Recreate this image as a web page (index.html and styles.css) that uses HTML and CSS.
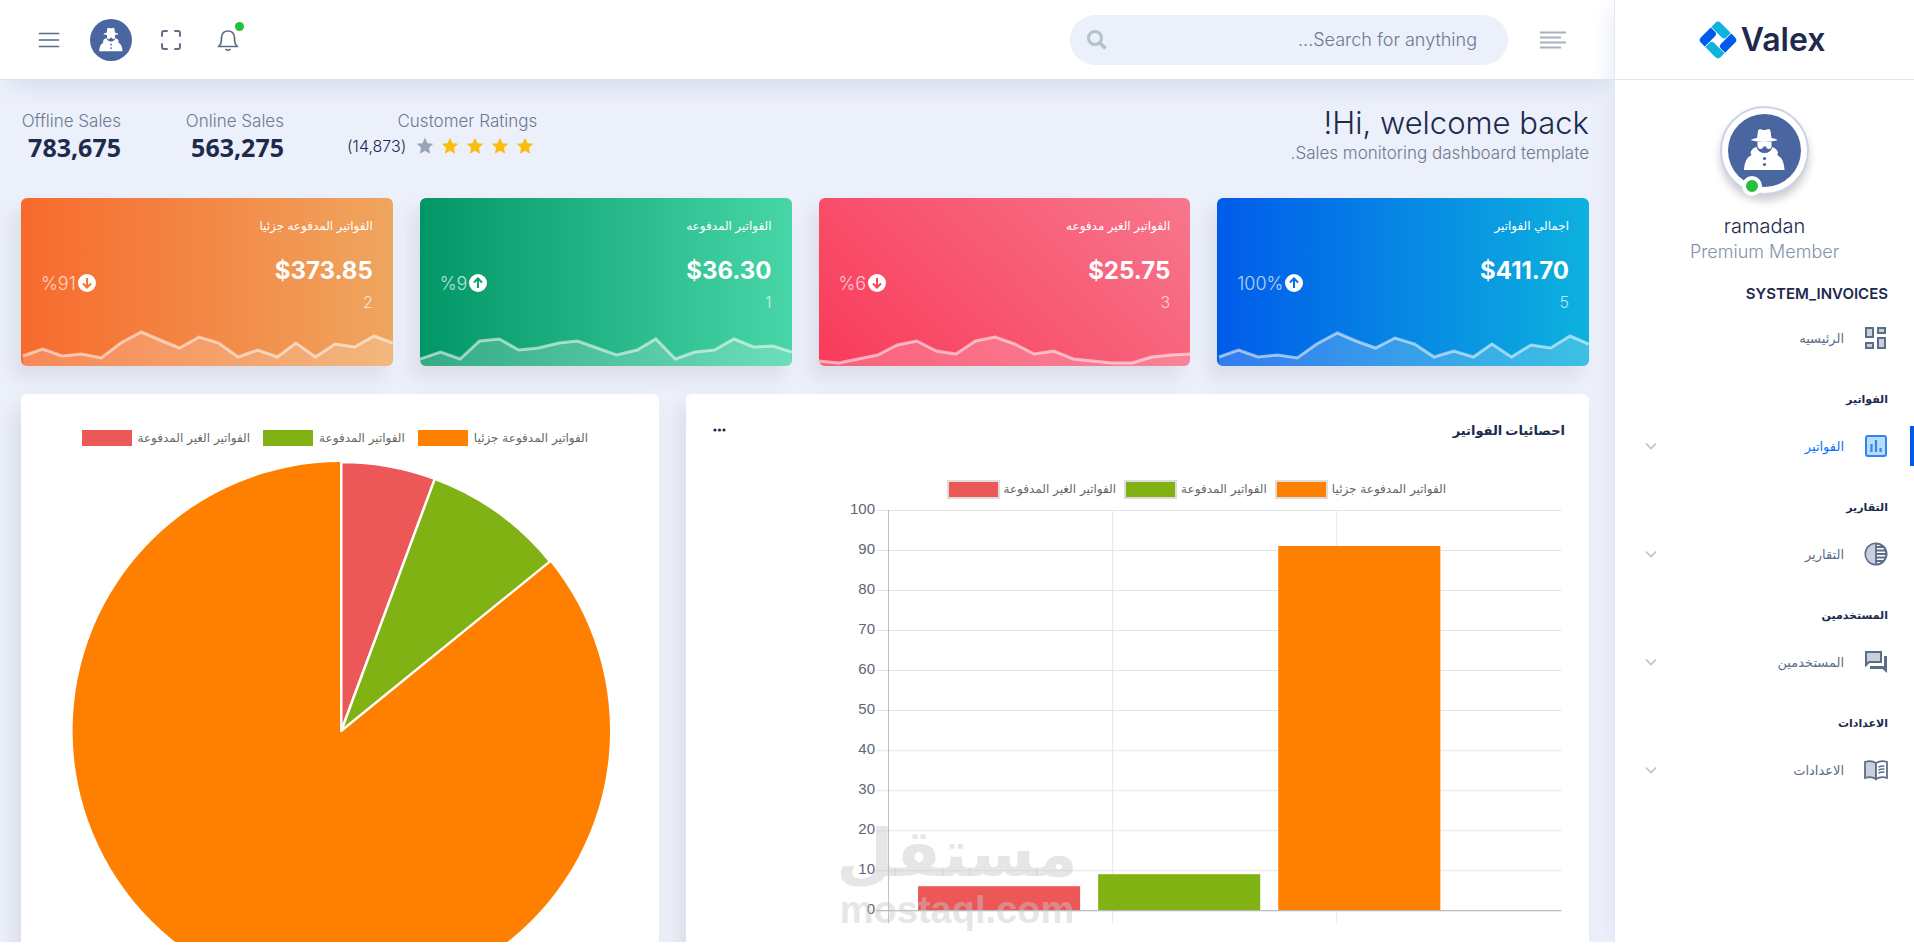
FILE: index.html
```html
<!DOCTYPE html>
<html lang="ar" dir="rtl">
<head>
  <meta charset="UTF-8" />
  <meta name="viewport" content="width=device-width, initial-scale=1.0"/>
  <title>Valex - Dashboard</title>
  <link rel="stylesheet" href="styles.css">
</head>
<body>

<!-- shared symbols -->
<svg class="symbols" aria-hidden="true">
  <symbol id="spy" viewBox="0 0 73 73">
    <circle cx="36.500" cy="36.500" r="36.500" fill="#4a66a0"/>
    <path fill="#fff" d="M29 24l1-7q1-3 3.500-1.500q2.800 1 5.500 0q3-1.500 3.500 1.500l1 7q5 .8 6 2.300q-6 1.700-13.500 1.700t-13-1.700q1-1.500 6-2.300z"/>
    <path fill="#fff" d="M29.500 28h14v4q0 3-2.500 3q-2.500 0-3-2.500h-2.500q-.5 2.500-3 2.500t-3-3z"/>
    <path fill="#fff" d="M28.500 33q2 6 8 6t8-6q5 2 5.500 6l-1 2q7 3 7.500 15h-40.500q.5-12 7.500-15l-1-2q1-5 6-6z"/>
    <circle cx="36.500" cy="44.500" r="1.600" fill="#4a66a0"/>
    <circle cx="36.500" cy="50.500" r="1.600" fill="#4a66a0"/>
  </symbol>
  <symbol id="star" viewBox="0 0 24 24">
    <path d="M12 1l3.300 7.300 7.700.8-5.800 5.300 1.700 8-6.900-4.200-6.900 4.200 1.700-8L1 9.100l7.700-.8z"/>
  </symbol>
  <symbol id="chevron" viewBox="0 0 12 12">
    <path d="M1 3.500l5 5 5-5" fill="none" stroke="#b4c4d2" stroke-width="1.600"/>
  </symbol>
  <symbol id="arrow-up" viewBox="0 0 20 20">
    <circle cx="10" cy="10" r="10" fill="#fff"/>
    <path d="M10 15.500v-10M5.500 9.500l4.500-4.500 4.500 4.500" fill="none" stroke="currentColor" stroke-width="2.200"/>
  </symbol>
  <symbol id="arrow-down" viewBox="0 0 20 20">
    <circle cx="10" cy="10" r="10" fill="#fff"/>
    <path d="M10 4.500v10M5.500 10.500l4.500 4.500 4.500-4.500" fill="none" stroke="currentColor" stroke-width="2.200"/>
  </symbol>
</svg>

<div class="page">

  <aside class="sidebar">
    <a class="logo" href="#">
      <span>Valex</span>
      <svg width="40" height="40" viewBox="0 0 40 40" aria-hidden="true">
        <g transform="rotate(45 20 20) translate(6 6)">
          <path fill="#0db2de" d="M4 0h14v6q0 3.500-3.500 3.500H0V4q0-4 4-4z"/>
          <path fill="#005bea" d="M18.800 0H24q4 0 4 4v14h-6q-3.200 0-3.200-3.500z"/>
          <path fill="#0db2de" d="M28 18.800V24q0 4-4 4H10v-6q0-3.200 3.500-3.200z"/>
          <path fill="#005bea" d="M9.200 28H4q-4 0-4-4V10.200h6q3.200 0 3.200 3.500z"/>
        </g>
      </svg>
    </a>

    <div class="profile">
      <div class="profile-picture">
        <svg width="73" height="73" aria-hidden="true"><use href="#spy"/></svg>
        <span class="status"></span>
      </div>
      <h4>ramadan</h4>
      <span class="role">Premium Member</span>
    </div>

    <nav class="side-menu">
      <h3 class="latin">SYSTEM_INVOICES</h3>
      <a href="#">
        <svg class="icon" viewBox="0 0 24 24" aria-hidden="true">
          <g fill="#c9d0dc" stroke="#5b6e88" stroke-width="2">
            <rect x="2" y="2" width="7" height="9"/><rect x="14" y="2" width="7" height="5"/>
            <rect x="2" y="17" width="7" height="5"/><rect x="14" y="12" width="7" height="10"/>
          </g>
        </svg>
        <span>الرئيسيه</span>
      </a>

      <h3>الفواتير</h3>
      <a class="active" href="#">
        <svg class="icon" viewBox="0 0 24 24" aria-hidden="true">
          <rect x="2" y="2" width="20" height="20" rx="2" fill="#b8dcfb" stroke="#2f86ee" stroke-width="2"/>
          <path d="M7.500 10v8M12 6v12M16.500 14v4" stroke="#2f86ee" stroke-width="2.200"/>
        </svg>
        <span>الفواتير</span>
        <svg class="chevron" aria-hidden="true"><use href="#chevron"/></svg>
      </a>

      <h3>التقارير</h3>
      <a href="#">
        <svg class="icon" viewBox="0 0 24 24" aria-hidden="true">
          <circle cx="12" cy="12" r="10.500" fill="#fff" stroke="#5b6e88" stroke-width="2"/>
          <path d="M12 2a10 10 0 0 0 0 20z" fill="#c9d0dc"/>
          <path d="M12 2v20M12 5h7M12 8.500h9M12 12h10M12 15.500h9M12 19h7" stroke="#5b6e88" stroke-width="1.800"/>
        </svg>
        <span>التقارير</span>
        <svg class="chevron" aria-hidden="true"><use href="#chevron"/></svg>
      </a>

      <h3>المستخدمين</h3>
      <a href="#">
        <svg class="icon" viewBox="0 0 24 24" aria-hidden="true">
          <path d="M2 2h15v10H5l-3 3z" fill="#c9d0dc" stroke="#5b6e88" stroke-width="2"/>
          <path d="M20 6h3v17l-4.500-4H6v-3h14z" fill="#5b6e88"/>
        </svg>
        <span>المستخدمين</span>
        <svg class="chevron" aria-hidden="true"><use href="#chevron"/></svg>
      </a>

      <h3>الاعدادات</h3>
      <a href="#">
        <svg class="icon" viewBox="0 0 24 24" aria-hidden="true">
          <path d="M12 5q-5-3-11-1v16q6-2 11 1z" fill="#c9d0dc" stroke="#5b6e88" stroke-width="1.800"/>
          <path d="M12 5q5-3 11-1v16q-6-2-11 1z" fill="#fff" stroke="#5b6e88" stroke-width="1.800"/>
          <path d="M14.500 9q3-1.200 6-.8M14.500 12q3-1.200 6-.8M14.500 15q3-1.200 6-.8" fill="none" stroke="#5b6e88" stroke-width="1.500"/>
        </svg>
        <span>الاعدادات</span>
        <svg class="chevron" aria-hidden="true"><use href="#chevron"/></svg>
      </a>
    </nav>
  </aside>

  <div class="main">

    <header class="header">
      <button class="icon-button" aria-label="Toggle sidebar">
        <svg width="26" height="20" viewBox="0 0 26 20"><path d="M0 2.500h26M0 7.500h21M0 12.500h26M0 17.500h21" stroke="#a9b0be" stroke-width="2.200"/></svg>
      </button>
      <form class="search">
        <label class="sr-only" for="searchInput">Search</label>
        <input type="text" id="searchInput" placeholder="Search for anything...">
        <button aria-label="Search">
          <svg width="22" height="22" viewBox="0 0 22 22"><circle cx="9" cy="9" r="6.500" fill="none" stroke="#b0c2ca" stroke-width="3"/><path d="M13.500 13.500l6 6" stroke="#b0c2ca" stroke-width="3.500"/></svg>
        </button>
      </form>

      <div class="header-right">
        <button class="icon-button bell" aria-label="Notifications">
          <svg width="24" height="24" viewBox="0 0 24 24" fill="none" stroke="#5b6e88" stroke-width="1.700">
            <path d="M2.500 18.500q3-1.500 3-9Q6 3 12 3t6.500 6.500q0 7.500 3 9z" stroke-linejoin="round"/><path d="M9.500 21q2.500 2.500 5 0"/>
          </svg>
          <span class="pulse"></span>
        </button>
        <button class="icon-button fullscreen" aria-label="Fullscreen">
          <svg width="24" height="24" viewBox="0 0 24 24" fill="none" stroke="#5b6e88" stroke-width="1.900" stroke-linecap="round">
            <path d="M8 3H5a2 2 0 0 0-2 2v3M16 3h3a2 2 0 0 1 2 2v3M21 16v3a2 2 0 0 1-2 2h-3M3 16v3a2 2 0 0 0 2 2h3"/>
          </svg>
        </button>
        <button class="icon-button" aria-label="Profile">
          <svg width="42" height="42"><use href="#spy"/></svg>
        </button>
        <button class="icon-button" aria-label="Menu">
          <svg width="24" height="24" viewBox="0 0 24 24" stroke="#5b6e88" stroke-width="1.700" stroke-linecap="round"><path d="M2.500 5.500h19M2.500 12h19M2.500 18.500h19"/></svg>
        </button>
      </div>
    </header>

    <main class="content">
      <div class="welcome">
        <div>
          <h2>Hi, welcome back!</h2>
          <p>Sales monitoring dashboard template.</p>
        </div>
        <div class="stats">
          <div class="stat">
            <span class="stat-label">Customer Ratings</span>
            <div class="rating">
              <svg><use href="#star"/></svg>
              <svg><use href="#star"/></svg>
              <svg><use href="#star"/></svg>
              <svg><use href="#star"/></svg>
              <svg class="off"><use href="#star"/></svg>
              <span>(14,873)</span>
            </div>
          </div>
          <div class="stat">
            <span class="stat-label">Online Sales</span>
            <strong>563,275</strong>
          </div>
          <div class="stat">
            <span class="stat-label">Offline Sales</span>
            <strong>783,675</strong>
          </div>
        </div>
      </div>

      <div class="grid">
        <section class="sales-card primary">
          <h6>اجمالي الفواتير</h6>
          <div class="sales-row">
            <div>
              <h4>$411.70</h4>
              <p>5</p>
            </div>
            <div class="percent"><svg><use href="#arrow-up"/></svg><span>100%</span></div>
          </div>
          <svg class="spark" viewBox="0 0 380 40" preserveAspectRatio="none" aria-hidden="true">
            <polygon points="2,40 2,31 22,24 42,31 62,29 82,32 102,18 123,7 142,15 162,22 182,12 202,18 222,31 242,25 262,31 281,18 301,31 321,19 341,22 361,10 380,18 380,40"/>
            <polyline points="2,31 22,24 42,31 62,29 82,32 102,18 123,7 142,15 162,22 182,12 202,18 222,31 242,25 262,31 281,18 301,31 321,19 341,22 361,10 380,18"/>
          </svg>
        </section>

        <section class="sales-card danger">
          <h6>الفواتير الغير مدفوعه</h6>
          <div class="sales-row">
            <div>
              <h4>$25.75</h4>
              <p>3</p>
            </div>
            <div class="percent"><svg><use href="#arrow-down"/></svg><span>%6</span></div>
          </div>
          <svg class="spark" viewBox="0 0 380 40" preserveAspectRatio="none" aria-hidden="true">
            <polygon points="0,40 0,35 20,37 40,33 60,29 80,19 100,15 120,25 140,28 160,15 180,11 200,18 220,28 240,25 260,33 280,35 300,37 320,37 340,31 360,29 380,28 380,40"/>
            <polyline points="0,35 20,37 40,33 60,29 80,19 100,15 120,25 140,28 160,15 180,11 200,18 220,28 240,25 260,33 280,35 300,37 320,37 340,31 360,29 380,28"/>
          </svg>
        </section>

        <section class="sales-card success">
          <h6>الفواتير المدفوعه</h6>
          <div class="sales-row">
            <div>
              <h4>$36.30</h4>
              <p>1</p>
            </div>
            <div class="percent"><svg><use href="#arrow-up"/></svg><span>%9</span></div>
          </div>
          <svg class="spark" viewBox="0 0 380 40" preserveAspectRatio="none" aria-hidden="true">
            <polygon points="0,40 0,33 21,26 41,33 61,15 81,13 101,24 121,22 142,17 161,15 181,22 201,29 222,24 241,13 261,33 281,26 301,24 321,13 341,21 361,20 380,26 380,40"/>
            <polyline points="0,33 21,26 41,33 61,15 81,13 101,24 121,22 142,17 161,15 181,22 201,29 222,24 241,13 261,33 281,26 301,24 321,13 341,21 361,20 380,26"/>
          </svg>
        </section>

        <section class="sales-card warning">
          <h6>الفواتير المدفوعه جزئيا</h6>
          <div class="sales-row">
            <div>
              <h4>$373.85</h4>
              <p>2</p>
            </div>
            <div class="percent"><svg><use href="#arrow-down"/></svg><span>%91</span></div>
          </div>
          <svg class="spark" viewBox="0 0 380 40" preserveAspectRatio="none" aria-hidden="true">
            <polygon points="2,40 2,30 22,23 42,30 62,28 82,32 102,17 123,6 142,14 162,22 182,11 202,17 222,31 242,24 262,31 281,17 301,31 321,18 341,21 361,10 380,17 380,40"/>
            <polyline points="2,30 22,23 42,30 62,28 82,32 102,17 123,6 142,14 162,22 182,11 202,17 222,31 242,24 262,31 281,17 301,31 321,18 341,21 361,10 380,17"/>
          </svg>
        </section>

        <section class="card bar-card">
          <div class="card-header">
            <h5>احصائيات الفواتير</h5>
            <button class="more" aria-label="More">
              <svg width="13" height="4" viewBox="0 0 13 4" fill="#1d2a4d"><circle cx="2" cy="2" r="1.600"/><circle cx="6.500" cy="2" r="1.600"/><circle cx="11" cy="2" r="1.600"/></svg>
            </button>
          </div>
          <div class="chart-area">
            <ul class="legend bordered">
              <li><i class="red"></i>الفواتير الغير المدفوعة</li>
              <li><i class="green"></i>الفواتير المدفوعة</li>
              <li><i class="orange"></i>الفواتير المدفوعة جزئيا</li>
            </ul>
            <svg class="chart" viewBox="0 0 733 440" role="img" aria-label="احصائيات الفواتير">
              <path class="grid-line" d="M44 10.500H729M44 50.500H729M44 90.500H729M44 130.500H729M44 170.500H729M44 210.500H729M44 250.500H729M44 290.500H729M44 330.500H729M44 370.500H729M280.500 10V423M504.500 10V423"/>
              <path class="axis-y" d="M56.500 10V423"/>
              <rect x="86" y="386" width="162" height="24" fill="#ec5858"/>
              <rect x="266" y="374" width="162" height="36" fill="#81b214"/>
              <rect x="446" y="46" width="162" height="364" fill="#ff8000"/>
              <path class="axis-x" d="M44 410.500H729"/>
              <g class="ticks">
                <text x="43" y="14">100</text>
                <text x="43" y="54">90</text>
                <text x="43" y="94">80</text>
                <text x="43" y="134">70</text>
                <text x="43" y="174">60</text>
                <text x="43" y="214">50</text>
                <text x="43" y="254">40</text>
                <text x="43" y="294">30</text>
                <text x="43" y="334">20</text>
                <text x="43" y="374">10</text>
                <text x="43" y="414">0</text>
              </g>
            </svg>
          </div>
        </section>

        <section class="card pie-card">
          <ul class="legend">
            <li><i class="red"></i>الفواتير الغير المدفوعة</li>
            <li><i class="green"></i>الفواتير المدفوعة</li>
            <li><i class="orange"></i>الفواتير المدفوعة جزئيا</li>
          </ul>
          <svg class="chart" viewBox="0 0 588 540" role="img" aria-label="الفواتير">
            <circle cx="295.500" cy="269" r="268" fill="#ff8000"/>
            <g stroke="#fff" stroke-width="2.400" stroke-linejoin="round">
              <path d="M295.500 269V1A268 268 0 0 1 388.800 17.800z" fill="#ec5858"/>
              <path d="M295.500 269L388.800 17.800A268 268 0 0 1 503.600 100.100z" fill="#81b214"/>
            </g>
          </svg>
        </section>
      </div>
    </main>
  </div>

  <div class="watermark">
    <span class="watermark-ar">مستقل</span>
    <span class="watermark-en">mostaql.com</span>
  </div>
</div>

</body>
</html>
```
FILE: styles.css
```css
* {
  box-sizing: border-box;
}

body {
  margin: 0;
  background: #fff;
  color: #1d2a4d;
  font-family: Inter, "DejaVu Sans", sans-serif;
  font-size: 16px;
}

h2, h3, h4, h5, h6, p, ul {
  margin: 0;
  padding: 0;
}

a {
  text-decoration: none;
}

button {
  padding: 0;
  border: 0;
  background: none;
  cursor: pointer;
}

svg {
  display: block;
  flex: none;
}

.symbols {
  position: absolute;
  width: 0;
  height: 0;
}

.sr-only {
  position: absolute;
  width: 1px;
  height: 1px;
  overflow: hidden;
  clip-path: inset(50%);
}

.page {
  position: relative;
  display: flex;
  height: calc(100vh - 7px);
  overflow: hidden;
}

/* sidebar */
.sidebar {
  flex: none;
  width: 300px;
  background: #fff;
  border-left: 1px solid #e3e8f7;
  box-shadow: 0 8px 24px #e2e5f5;
  z-index: 2;
}

.logo {
  display: flex;
  justify-content: center;
  align-items: center;
  gap: 3px;
  height: 80px;
  padding-right: 6px;
  border-bottom: 1px solid #e3e3f0;
  color: #1d2a4d;
  font-size: 32px;
  font-weight: 600;
}

.profile {
  display: flex;
  flex-direction: column;
  align-items: center;
  padding-top: 26px;
}

.profile-picture {
  position: relative;
  padding: 6px;
  border: 2px solid #ccd3e4;
  border-radius: 50%;
  background: #fff;
  box-shadow: 0 6px 8px rgba(0, 0, 0, .2);
}

.status {
  position: absolute;
  left: 20px;
  bottom: -3px;
  width: 20px;
  height: 20px;
  border: 4px solid #fff;
  border-radius: 50%;
  background: #22c03c;
}

.profile h4 {
  margin-top: 18px;
  font-size: 20px;
  line-height: 26px;
  font-weight: 300;
}

.role {
  font-size: 18px;
  line-height: 26px;
  font-weight: 300;
  color: #8492ab;
}

.side-menu h3 {
  padding: 32px 26px 16px;
  font-family: "DejaVu Sans", sans-serif;
  font-size: 11px;
  line-height: 20px;
  font-weight: 700;
}

.side-menu h3.latin {
  padding-top: 19px;
  padding-bottom: 14px;
  font-family: Inter, sans-serif;
  font-size: 15px;
  font-weight: 600;
}

.side-menu a {
  display: flex;
  align-items: center;
  gap: 20px;
  height: 40px;
  padding: 0 26px 0 30px;
  border-right: 0 solid #005bea;
  color: #5b6e88;
  font-size: 13px;
}

.side-menu a.active {
  padding-right: 22px;
  border-right-width: 4px;
  color: #0774f8;
}

.icon {
  width: 24px;
  height: 24px;
}

.chevron {
  width: 12px;
  height: 12px;
  margin-right: auto;
}

/* header */
.main {
  flex: 1;
  min-width: 0;
  background: #ecf0fa;
}

.header {
  position: relative;
  display: flex;
  align-items: center;
  height: 80px;
  padding: 0 48px 0 37px;
  background: #fff;
  border-bottom: 1px solid #dde2ef;
  box-shadow: 5px 7px 26px -5px #cdd4e7;
}

.search {
  display: flex;
  align-items: center;
  width: 438px;
  height: 50px;
  margin-right: 32px;
  padding: 0 31px 0 16px;
  border-radius: 25px;
  background: #ecf0fa;
}

.search input {
  flex: 1;
  min-width: 0;
  height: 50px;
  padding: 0;
  border: 0;
  outline: 0;
  background: none;
  font-family: inherit;
  font-size: 18px;
  font-weight: 300;
}

.search input::placeholder {
  color: #6c7893;
}

.header-right {
  display: flex;
  align-items: center;
  gap: 29px;
  margin-right: auto;
}

.bell {
  position: relative;
  margin-left: 4px;
}

.fullscreen {
  margin-left: -2px;
}

.pulse {
  position: absolute;
  top: -6px;
  right: -4px;
  width: 9px;
  height: 9px;
  border-radius: 50%;
  background: #22c03c;
}

/* content */
.content {
  padding: 26px 25px 0 21px;
}

.welcome {
  display: flex;
  justify-content: space-between;
  height: 92px;
}

.welcome h2 {
  font-size: 31px;
  line-height: 34px;
  font-weight: 300;
}

.welcome p {
  font-size: 17px;
  line-height: 26px;
  font-weight: 300;
  color: #6c7893;
}

.stats {
  display: flex;
  gap: 63px;
}

.stat {
  min-width: 100px;
}

.stat-label {
  display: block;
  font-size: 17px;
  line-height: 30px;
  font-weight: 300;
  color: #6c7893;
}

.stat strong {
  display: block;
  font-family: "Open Sans", sans-serif;
  font-size: 25px;
  line-height: 22px;
  font-weight: 700;
}

.rating {
  display: flex;
  align-items: center;
  gap: 7px;
  height: 20px;
  padding-right: 3px;
  font-weight: 300;
}

.rating svg {
  width: 18px;
  height: 18px;
  fill: #fbbc0b;
}

.rating .off {
  fill: #97a3b9;
}

.rating span {
  margin-right: 3px;
}

.grid {
  display: grid;
  grid-template-columns: repeat(12, 1fr);
  gap: 28px 27px;
}

.sales-card {
  grid-column: span 3;
  height: 168px;
  padding: 18px 20px 0;
  border-radius: 6px;
  box-shadow: -8px 12px 18px 0 #dadee8;
  color: #fff;
  display: flex;
  flex-direction: column;
  overflow: hidden;
}

.primary {
  background: linear-gradient(to left, #0db2de, #005bea);
}

.danger {
  background: linear-gradient(45deg, #f93a5a, #f7778c);
}

.success {
  background: linear-gradient(to left, #48d6a8, #029666);
}

.warning {
  background: linear-gradient(to left, #efa65f, #f76a2d);
}

.sales-card h6 {
  font-size: 12px;
  line-height: 20px;
  font-weight: 400;
}

.sales-row {
  display: flex;
  justify-content: space-between;
  margin-top: 18px;
}

.sales-row h4 {
  font-size: 24px;
  line-height: 34px;
  font-weight: 700;
}

.sales-row p {
  font-size: 16px;
  line-height: 28px;
  font-weight: 300;
  opacity: .7;
}

.percent {
  display: flex;
  align-items: center;
  gap: 2px;
  height: 58px;
  font-size: 18px;
  font-weight: 300;
}

.percent span {
  opacity: .7;
}

.percent svg {
  width: 18px;
  height: 18px;
}

.primary .percent svg { color: #0173e6; }
.danger .percent svg { color: #f9475f; }
.success .percent svg { color: #0ca174; }
.warning .percent svg { color: #f7732f; }

.spark {
  width: calc(100% + 40px);
  height: 40px;
  margin: auto -20px 0;
}

.spark polygon {
  fill: rgba(255, 255, 255, .2);
}

.spark polyline {
  fill: none;
  stroke: rgba(255, 255, 255, .55);
  stroke-width: 3;
  vector-effect: non-scaling-stroke;
}

.card {
  padding: 24px;
  border-radius: 6px;
  background: #fff;
  box-shadow: -8px 12px 18px 0 #dadee8;
}

.bar-card {
  grid-column: span 7;
}

.pie-card {
  grid-column: span 5;
}

.card-header {
  display: flex;
  justify-content: space-between;
  align-items: center;
  height: 24px;
}

.card-header h5 {
  font-size: 13px;
  font-weight: 700;
}

.more {
  margin-left: 3px;
}

.chart-area {
  margin-left: 122px;
  padding-top: 36px;
}

.legend {
  direction: ltr;
  display: flex;
  justify-content: center;
  gap: 13px;
  list-style: none;
  color: #666;
  font-family: "DejaVu Sans", sans-serif;
  font-size: 12px;
}

.legend li {
  display: flex;
  align-items: center;
  gap: 6px;
  height: 22px;
}

.legend i {
  width: 50px;
  height: 16px;
}

.legend.bordered {
  gap: 8px;
  padding-right: 4px;
}

.legend.bordered li {
  gap: 4px;
}

.legend.bordered i {
  width: 53px;
  height: 19px;
  border: 2px solid #ddd;
}

.pie-card .legend {
  padding: 9px 10px 12px 0;
}

.red { background: #ec5858; }
.green { background: #81b214; }
.orange { background: #ff8000; }

.chart {
  width: 100%;
  direction: ltr;
}

.grid-line {
  stroke: rgba(0, 0, 0, .1);
  fill: none;
}

.axis-y {
  stroke: rgba(0, 0, 0, .25);
}

.axis-x {
  stroke: #a8aab2;
}

.ticks text {
  font-family: "Liberation Sans", sans-serif;
  font-size: 15px;
  text-anchor: end;
  fill: #5f6577;
}

/* watermark over the charts */
.watermark {
  position: absolute;
  left: 50%;
  bottom: 10px;
  z-index: 3;
  display: flex;
  flex-direction: column;
  align-items: center;
  transform: translateX(-50%);
  color: rgba(200, 200, 200, .45);
  font-weight: 700;
  pointer-events: none;
}

.watermark-ar {
  font-family: "DejaVu Sans", sans-serif;
  font-size: 66px;
  line-height: 68px;
}

.watermark-en {
  font-family: "Liberation Sans", sans-serif;
  font-size: 38px;
  line-height: 44px;
}
```
